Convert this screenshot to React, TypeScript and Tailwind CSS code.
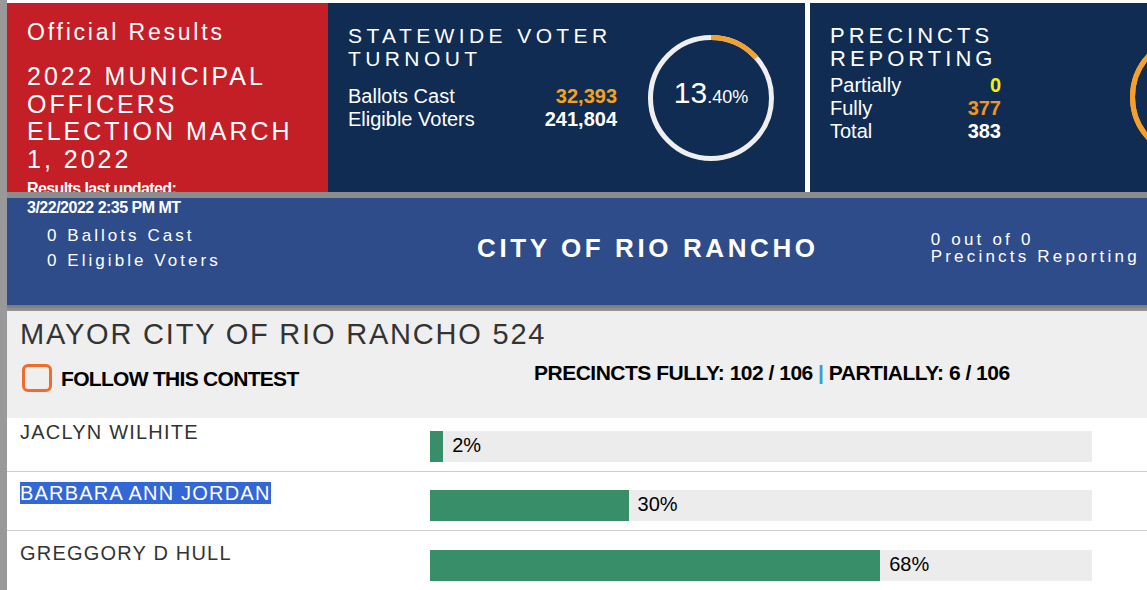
import React from 'react';

const candidates = [
  { name: 'JACLYN WILHITE', pct: 2, rowPad: 'pt-[3px]', barGap: 'mt-[10px]', selected: false },
  { name: 'BARBARA ANN JORDAN', pct: 30, rowPad: 'pt-[10px]', barGap: 'mt-[8px]', selected: true },
  { name: 'GREGGORY D HULL', pct: 68, rowPad: 'pt-[11px]', barGap: 'mt-[8px]', selected: false },
];

function Donut({ pct, track, arc }: { pct: number; track: string; arc: string }) {
  const r = 60.5;
  const c = 2 * Math.PI * r;
  return (
    <svg width="126" height="126" viewBox="0 0 126 126" className="block">
      <circle cx="63" cy="63" r={r} fill="none" stroke={track} strokeWidth="5" />
      <circle
        cx="63"
        cy="63"
        r={r}
        fill="none"
        stroke={arc}
        strokeWidth="5"
        strokeDasharray={`${(c * pct) / 100} ${c}`}
        transform="rotate(-90 63 63)"
      />
    </svg>
  );
}

export default function App() {
  return (
    <div className="flex min-h-screen w-full overflow-hidden bg-[#999999] font-['Liberation_Sans',Arial,sans-serif]">
      <div className="w-[7px] shrink-0" />
      <div className="min-w-0 flex-1">
        <div className="h-[3px] bg-white" />

        {/* Header panels */}
        <div className="flex h-[189px]">
          <div className="w-[321px] shrink-0 overflow-hidden bg-[#c41e26] px-[20px] pt-[17px] text-white">
            <div className="text-[23px] leading-[25px] tracking-[2.8px]">Official Results</div>
            <div className="mt-[18px] text-[25px] leading-[27.5px] tracking-[3px]">
              2022 MUNICIPAL OFFICERS ELECTION MARCH 1, 2022
            </div>
            <div className="mt-[6px] text-[16px] font-bold leading-[19px] tracking-[-0.6px]">
              Results last updated:
            </div>
          </div>

          <div className="flex w-[477px] shrink-0 items-start bg-[#102c52] pl-[20px] pt-[21px] text-white">
            <div className="w-[269px] shrink-0">
              <div className="text-[21px] leading-[23px] tracking-[4.4px]">STATEWIDE VOTER TURNOUT</div>
              <div className="mt-[15px] text-[20px] leading-[23px]">
                <div className="flex justify-between">
                  <span>Ballots Cast</span>
                  <span className="font-bold text-[#f7a21e]">32,393</span>
                </div>
                <div className="flex justify-between">
                  <span>Eligible Voters</span>
                  <span className="font-bold">241,804</span>
                </div>
              </div>
            </div>
            <div className="relative ml-[31px] mt-[11px] shrink-0">
              <Donut pct={13.4} track="#efefef" arc="#f6a02c" />
              <div className="absolute inset-0 flex items-center justify-center">
                <span className="mb-[12px] whitespace-nowrap">
                  <span className="text-[30px]">13</span>
                  <span className="text-[18px]">.40%</span>
                </span>
              </div>
            </div>
          </div>

          <div className="w-[5px] shrink-0 bg-white" />

          <div className="flex flex-1 items-start bg-[#102c52] pl-[20px] pt-[21px] text-white">
            <div className="w-[171px] shrink-0">
              <div className="text-[22px] leading-[23px] tracking-[4px]">PRECINCTS REPORTING</div>
              <div className="mt-[4px] text-[20px] leading-[23px]">
                <div className="flex justify-between">
                  <span>Partially</span>
                  <span className="font-bold text-[#f2f20a]">0</span>
                </div>
                <div className="flex justify-between">
                  <span>Fully</span>
                  <span className="font-bold text-[#f7941d]">377</span>
                </div>
                <div className="flex justify-between">
                  <span>Total</span>
                  <span className="font-bold">383</span>
                </div>
              </div>
            </div>
            <div className="ml-[129px] mt-[10px] shrink-0">
              <Donut pct={100} track="#f6a02c" arc="#f6a02c" />
            </div>
          </div>
        </div>

        <div className="h-[6px] bg-[#8c8c8c]" />

        {/* County band */}
        <div className="h-[107px] bg-[#2f4c8a] pl-[20px] text-white">
          <div className="text-[16px] font-bold leading-[19px] tracking-[-0.5px]">3/22/2022 2:35 PM MT</div>
          <div className="flex h-[62px] items-center">
            <div className="ml-[20px] w-[430px] shrink-0 text-[17px] leading-[25px] tracking-[3.05px]">
              <div>0 Ballots Cast</div>
              <div>0 Eligible Voters</div>
            </div>
            <div className="whitespace-nowrap text-[26px] font-bold leading-[30px] tracking-[3.6px]">
              CITY OF RIO RANCHO
            </div>
            <div className="ml-[112px] whitespace-nowrap text-[17px] leading-[17px] tracking-[3.2px]">
              <div>0 out of 0</div>
              <div>Precincts Reporting</div>
            </div>
          </div>
        </div>

        <div className="h-[6px] bg-gradient-to-b from-[#7a7a7a] to-[#969696]" />

        {/* Contest header */}
        <div className="h-[107px] bg-[#efefef] pl-[13px] pt-[7px]">
          <div className="text-[29px] leading-[33px] tracking-[1.8px] text-[#333333]">
            MAYOR CITY OF RIO RANCHO 524
          </div>
          <div className="mt-[13px] flex items-start">
            <div className="flex w-[514px] shrink-0 items-start">
              <div className="ml-[2px] h-[28px] w-[30px] rounded-[6px] border-[3px] border-[#f26b2b]" />
              <span className="ml-[9px] mt-[3px] text-[21px] font-bold leading-[24px] tracking-[-0.7px] text-black">
                FOLLOW THIS CONTEST
              </span>
            </div>
            <div className="-mt-[3px] whitespace-nowrap text-[21px] font-bold leading-[24px] tracking-[-0.5px] text-black">
              PRECINCTS FULLY: 102 / 106 <span className="text-[#3a9ad9]">|</span> PARTIALLY: 6 / 106
            </div>
          </div>
        </div>

        {/* Candidates */}
        <div className="bg-white">
          {candidates.map((c) => (
            <div
              key={c.name}
              className={`flex border-b border-[#cccccc] pb-[9px] pl-[13px] ${c.rowPad}`}
            >
              <div className="w-[410px] shrink-0 text-[20px] leading-[22px] tracking-[1.2px] text-[#333333]">
                {c.selected ? <span className="bg-[#3367d6] text-white">{c.name}</span> : c.name}
              </div>
              <div className={`flex h-[31px] w-[662px] shrink-0 items-center bg-[#ececec] ${c.barGap}`}>
                <div className="h-full bg-[#398e6a]" style={{ width: `${c.pct}%` }} />
                <span className="mb-[4px] ml-[9px] text-[20px] leading-[22px] text-black">{c.pct}%</span>
              </div>
            </div>
          ))}
        </div>
      </div>
    </div>
  );
}
